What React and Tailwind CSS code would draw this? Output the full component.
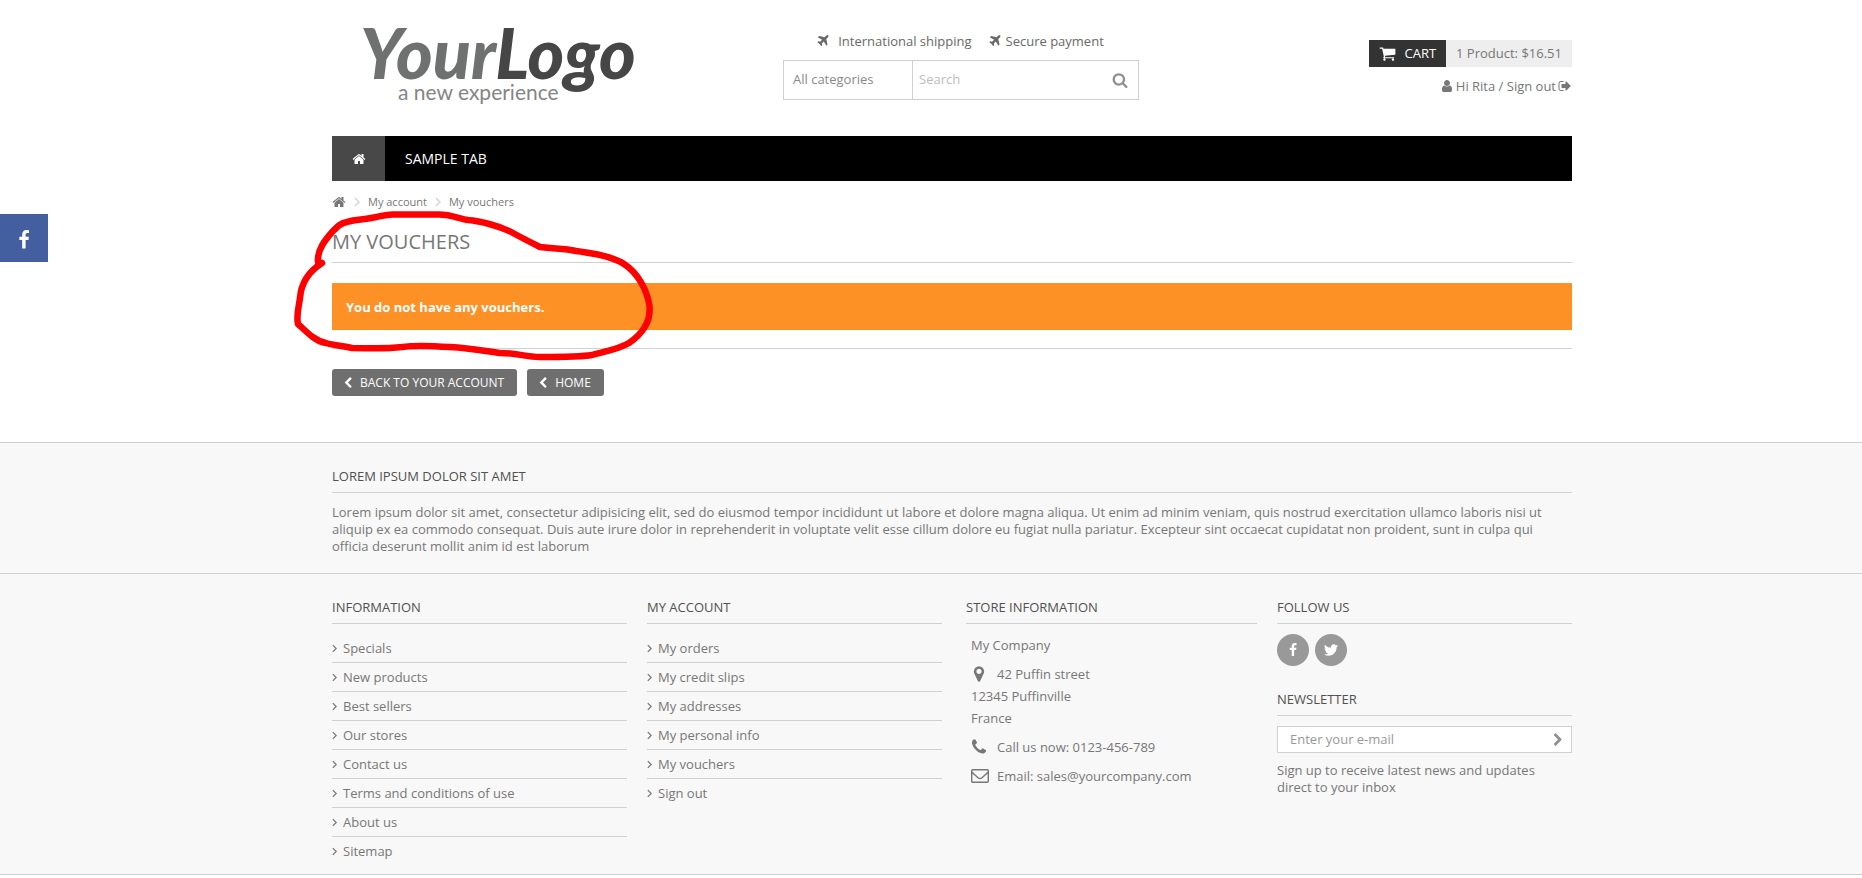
import React from "react";

const ICONS = {
  home: "M1472 992v480q0 26-19 45t-45 19h-384v-384h-256v384h-384q-26 0-45-19t-19-45v-480q0-1 .5-3t.5-3l575-474 575 474q1 2 1 6zm223-69l-62 74q-8 9-21 11h-3q-13 0-21-7l-692-577-692 577q-12 8-24 7-13-2-21-11l-62-74q-8-10-7-23.5t11-21.5l719-599q32-26 76-26t76 26l244 204v-195q0-14 9-23t23-9h192q14 0 23 9t9 23v408l219 182q10 8 11 21.5t-7 23.5z",
  plane: "M1568 160q44 52 12 148t-108 172l-161 161 160 696q5 19-12 33l-128 96q-7 6-19 6-4 0-7-1-15-3-21-16l-279-508-259 259 53 194q5 17-8 31l-96 96q-9 9-23 9h-2q-15-2-24-13l-189-252-252-189q-11-7-13-23-1-13 9-25l96-97q9-9 23-9 6 0 8 1l194 53 259-259-508-279q-14-8-17-24-2-16 9-27l128-128q14-13 30-8l665 159 160-160q76-76 172-108t148 12z",
  search: "M1216 832q0-185-131.5-316.5t-316.5-131.5-316.5 131.5-131.5 316.5 131.5 316.5 316.5 131.5 316.5-131.5 131.5-316.5zm512 832q0 52-38 90t-90 38q-54 0-90-38l-343-342q-179 124-399 124-143 0-273.5-55.5t-225-150-150-225-55.5-273.5 55.5-273.5 150-225 225-150 273.5-55.5 273.5 55.5 225 150 150 225 55.5 273.5q0 220-124 399l343 343q37 37 37 90z",
  cart: "M704 1536q0 52-38 90t-90 38-90-38-38-90 38-90 90-38 90 38 38 90zm896 0q0 52-38 90t-90 38-90-38-38-90 38-90 90-38 90 38 38 90zm128-1088v512q0 24-16.5 42.5t-40.5 21.5l-1044 122q13 60 13 70 0 16-24 64h920q26 0 45 19t19 45-19 45-45 19h-1024q-26 0-45-19t-19-45q0-11 8-31.5t16-36 21.5-40 15.5-29.5l-177-823h-204q-26 0-45-19t-19-45 19-45 45-19h256q16 0 28.5 6.5t19.5 15.5 13 24.5 8 26 5.5 29.5 4.5 26h1201q26 0 45 19t19 45z",
  user: "M1536 1399q0 109-62.5 187t-150.5 78h-854q-88 0-150.5-78t-62.5-187q0-85 8.5-160.5t31.5-152 58.5-131 94-89 134.5-34.5q131 128 313 128t313-128q76 0 134.5 34.5t94 89 58.5 131 31.5 152 8.5 160.5zm-256-887q0 159-112.5 271.5t-271.5 112.5-271.5-112.5-112.5-271.5 112.5-271.5 271.5-112.5 271.5 112.5 112.5 271.5z",
  signOut: "M704 1440q0 4 1 20t.5 26.5-3 23.5-10 19.5-20.5 6.5h-320q-119 0-203.5-84.5t-84.5-203.5v-704q0-119 84.5-203.5t203.5-84.5h320q13 0 22.5 9.5t9.5 22.5q0 4 1 20t.5 26.5-3 23.5-10 19.5-20.5 6.5h-320q-66 0-113 47t-47 113v704q0 66 47 113t113 47h312l11.5 1 11.5 3 8 5.5 7 9 2 13.5zm928-544q0 26-19 45l-544 544q-19 19-45 19t-45-19-19-45v-288h-448q-26 0-45-19t-19-45v-384q0-26 19-45t45-19h448v-288q0-26 19-45t45-19 45 19l544 544q19 19 19 45z",
  chevronLeft: "M1427 301l-531 531 531 531q19 19 19 45t-19 45l-166 166q-19 19-45 19t-45-19l-742-742q-19-19-19-45t19-45l742-742q19-19 45-19t45 19l166 166q19 19 19 45t-19 45z",
  chevronRight: "M365 301l531 531-531 531q-19 19-19 45t19 45l166 166q19 19 45 19t45-19l742-742q19-19 19-45t-19-45l-742-742q-19-19-45-19t-45 19l-166 166q-19 19-19 45t19 45z",
  facebook: "M1343 12v264h-157q-86 0-116 36t-30 108v189h293l-39 296h-254v759h-306v-759h-255v-296h255v-218q0-186 104-288.5t277-102.5q147 0 228 12z",
  twitter: "M1684 408q-67 98-162 167 1 14 1 42 0 130-38 259.5t-115.5 248.5-184.5 210.5-258 146-323 54.5q-271 0-496-145 35 4 78 4 225 0 401-138-105-2-188-64.5t-114-159.5q33 5 61 5 43 0 85-11-112-23-185.5-111.5t-73.5-205.5v-4q68 38 146 41-66-44-105-115t-39-154q0-88 44-163 121 149 294.5 238.5t371.5 99.5q-8-38-8-74 0-134 94.5-228.5t228.5-94.5q140 0 236 102 109-21 205-78-37 115-142 178 93-10 186-50z",
  marker: "M1152 640q0-106-75-181t-181-75-181 75-75 181 75 181 181 75 181-75 75-181zm256 0q0 109-33 179l-364 774q-16 33-47.5 52t-67.5 19-67.5-19-46.5-52l-365-774q-33-70-33-179 0-212 150-362t362-150 362 150 150 362z",
  phone: "M1600 1240q0 27-10 70.5t-21 68.5q-21 50-122 106-94 51-186 51-27 0-53-3.5t-57.5-12.5-47-14.5-55.5-20.5-49-18q-98-35-175-83-127-79-264-216t-216-264q-48-77-83-175-3-9-18-49t-20.5-55.5-14.5-47-12.5-57.5-3.5-53q0-92 51-186 56-101 106-122 25-11 68.5-21t70.5-10q14 0 21 3 18 6 53 76 11 19 30 54t35 63.5 31 53.5q3 4 17.5 25t21.5 35.5 7 28.5q0 20-28.5 50t-62 55-62 53-28.5 46q0 9 5 22.5t8.5 20.5 14 24 11.5 19q76 137 174 235t235 174q2 1 19 11.5t24 14 20.5 8.5 22.5 5q18 0 46-28.5t53-62 55-62 50-28.5q14 0 28.5 7t35.5 21.5 25 17.5q25 15 53.5 31t63.5 35 54 30q70 35 76 53 3 7 3 21z",
};

const Icon = ({ name, className }) => (
  <svg viewBox="0 0 1792 1792" fill="currentColor" aria-hidden="true" className={`shrink-0 ${className}`}>
    <path d={ICONS[name]} />
  </svg>
);

// Thin ">" used by the breadcrumb and the footer lists
const Angle = ({ className }) => (
  <svg viewBox="0 0 6 10" fill="none" stroke="currentColor" strokeWidth="1.5" aria-hidden="true" className={`shrink-0 ${className}`}>
    <path d="M1 1l4 4-4 4" />
  </svg>
);

const Envelope = ({ className }) => (
  <svg viewBox="0 0 18 14" fill="none" stroke="currentColor" strokeWidth="1.4" aria-hidden="true" className={`shrink-0 ${className}`}>
    <rect x="0.7" y="0.7" width="16.6" height="12.6" rx="1" />
    <path d="M1 3c1 1.500 2 2.200 3 3L7 8.800c1.400 1.100 2.600 1.100 4 0L14 6c1-.8 2-1.500 3-3" />
  </svg>
);

const Container = ({ className = "", children }) => (
  <div className="pl-[42px]">
    <div className={`mx-auto max-w-[1240px] ${className}`}>{children}</div>
  </div>
);

const infoLinks = [
  "Specials",
  "New products",
  "Best sellers",
  "Our stores",
  "Contact us",
  "Terms and conditions of use",
  "About us",
  "Sitemap",
];

const accountLinks = [
  "My orders",
  "My credit slips",
  "My addresses",
  "My personal info",
  "My vouchers",
  "Sign out",
];

const FooterTitle = ({ children }) => (
  <h4 className="border-b border-[#d0d0d0] pb-2 text-[13px] leading-4 text-[#515151] uppercase">
    {children}
  </h4>
);

const LinkColumn = ({ title, links }) => (
  <section>
    <FooterTitle>{title}</FooterTitle>
    <ul className="mt-2.5">
      {links.map((link) => (
        <li key={link} className="border-b border-[#d0d0d0] last:border-b-0">
          <a href="#" className="flex h-7 items-center gap-1.5 pt-px">
            <Angle className="h-[9px] w-[5px]" />
            {link}
          </a>
        </li>
      ))}
    </ul>
  </section>
);

const Header = () => (
  <header>
    <Container>
      <div className="grid h-[136px] grid-cols-[451fr_356fr_433fr]">
        <a href="#" className="pl-6" aria-label="YourLogo, a new experience">
          <svg viewBox="0 0 320 120" className="h-[120px] w-[320px] overflow-visible">
            <text x="4" y="79" fill="#6f7070" fontFamily="'Brush Script MT', Lato, cursive" fontSize="70" fontWeight="900" fontStyle="italic">
              Your<tspan fill="#464646">Logo</tspan>
            </text>
            <text x="42" y="100" fill="#858585" fontFamily="Lato, sans-serif" fontSize="21" fontWeight="400">
              a new experience
            </text>
          </svg>
        </a>

        <div className="pt-8">
          <div className="flex items-center justify-center gap-4 pr-0.5 leading-[18px] text-[#696969]">
            <span className="flex items-center gap-2">
              <Icon name="plane" className="h-3.5 w-3.5" />
              International shipping
            </span>
            <span className="flex items-center gap-1">
              <Icon name="plane" className="h-3.5 w-3.5" />
              Secure payment
            </span>
          </div>
          <form className="mt-2.5 flex h-10 border border-[#d0d0d0]">
            <select aria-label="Category" className="w-[129px] appearance-none border-r border-[#d0d0d0] pl-[9px] text-[#8a8a8a]">
              <option>All categories</option>
            </select>
            <input type="text" aria-label="Search" placeholder="Search" className="min-w-0 flex-1 px-1.5 placeholder:text-[#bdbdbd]" />
            <button type="button" aria-label="Submit search" className="px-2.5 text-[#8f8f8f]">
              <Icon name="search" className="h-4 w-4" />
            </button>
          </form>
        </div>

        <div className="flex flex-col items-end pt-10">
          <a href="#" className="flex leading-[27px]">
            <span className="flex items-center gap-2 bg-[#333] px-2.5 text-white">
              <Icon name="cart" className="h-[17px] w-[17px]" />
              CART
            </span>
            <span className="bg-[#eee] px-2.5">1 Product: $16.51</span>
          </a>
          <div className="mt-2.5 flex items-center gap-0.5 leading-[18px]">
            <Icon name="user" className="h-3.5 w-3.5" />
            <span>
              <a href="#">Hi Rita</a> / <a href="#">Sign out</a>
            </span>
            <Icon name="signOut" className="h-3.5 w-3.5" />
          </div>
        </div>
      </div>

      <nav className="flex h-[45px] bg-black text-sm text-white">
        <a href="#" aria-label="Home" className="flex w-[53px] items-center justify-center bg-[#484848]">
          <Icon name="home" className="h-3.5 w-3.5" />
        </a>
        <a href="#" className="flex items-center px-5">SAMPLE TAB</a>
      </nav>
    </Container>
  </header>
);

const BackButton = ({ children }) => (
  <a href="#" className="flex h-[27px] items-center gap-1.5 rounded-[3px] bg-[#6f6f6f] pr-[13px] pl-2.5 text-xs text-white">
    <Icon name="chevronLeft" className="h-3 w-3" />
    {children}
  </a>
);

const Vouchers = () => (
  <main>
    <Container className="relative pb-[46px]">
      <nav aria-label="Breadcrumb" className="flex items-center gap-2 pt-3 text-[11px] leading-[18px]">
        <a href="#" aria-label="Home">
          <Icon name="home" className="h-3.5 w-3.5" />
        </a>
        <Angle className="h-2.5 w-1.5 text-[#d6d4d4]" />
        <a href="#">My account</a>
        <Angle className="h-2.5 w-1.5 text-[#d6d4d4]" />
        <span>My vouchers</span>
      </nav>

      <h1 className="mt-[17px] border-b border-[#d0d0d0] pb-1.5 text-xl leading-7 uppercase">My vouchers</h1>

      <p className="mt-5 bg-[#fe9126] px-3.5 pt-px text-[13px] leading-[46px] font-bold text-white">
        You do not have any vouchers.
      </p>

      <div className="mt-[18px] flex gap-2.5 border-t border-[#d0d0d0] pt-5">
        <BackButton>BACK TO YOUR ACCOUNT</BackButton>
        <BackButton>HOME</BackButton>
      </div>

      {/* hand-drawn marker around the message */}
      <svg
        viewBox="290 205 370 160"
        fill="none"
        stroke="#ff0000"
        strokeWidth="6.5"
        strokeLinecap="round"
        strokeLinejoin="round"
        aria-hidden="true"
        className="pointer-events-none absolute top-6 -left-[42px] h-40 w-[370px]"
      >
        <path d="M318 262C317 250 325 240 333 231C338 226 341 223 347 222C356 219 362 220 371 218C380 217 385 214 394 214.500L438 214.500C450 214 460 219 468 220C480 221 500 226 513 233C524 239 532 243 540 247C556 249 564 248 576 251C592 253 614 257 624 264C638 273 647 290 649.500 306C651 322 642 334 629 343C617 350 605 351 592 355C580 357 560 357 540 357C525 357 518 353 500 353C485 351 470 348 450 347C435 346 415 345 402 347C385 349 370 348 352 348C342 346 333 345 326 343C314 341 305 330 298 324C296 315 299 306 300 298C301 284 308 272 322 263" />
      </svg>
    </Container>
  </main>
);

const Footer = () => (
  <footer className="border-y border-[#d0d0d0] bg-[#f8f8f8]">
    <div className="border-b border-[#d0d0d0] pt-[25px] pb-[18px]">
      <Container>
        <FooterTitle>Lorem ipsum dolor sit amet</FooterTitle>
        <p className="mt-[11px] leading-[17px]">
          Lorem ipsum dolor sit amet, consectetur adipisicing elit, sed do eiusmod tempor incididunt ut labore et
          dolore magna aliqua. Ut enim ad minim veniam, quis nostrud exercitation ullamco laboris nisi ut aliquip ex
          ea commodo consequat. Duis aute irure dolor in reprehenderit in voluptate velit esse cillum dolore eu fugiat
          nulla pariatur. Excepteur sint occaecat cupidatat non proident, sunt in culpa qui officia deserunt mollit
          anim id est laborum
        </p>
      </Container>
    </div>

    <Container className="grid grid-cols-4 gap-5 pt-[25px] pb-[9px]">
      <LinkColumn title="Information" links={infoLinks} />
      <LinkColumn title="My account" links={accountLinks} />

      <section className="pl-1">
        <FooterTitle>Store information</FooterTitle>
        <address className="mt-2.5 px-[5px] leading-[22px] not-italic">
          <p>My Company</p>
          <p className="mt-[7px] flex items-center gap-2">
            <Icon name="marker" className="-ml-0.5 h-[18px] w-5" />
            42 Puffin street
          </p>
          <p>12345 Puffinville</p>
          <p>France</p>
          <p className="mt-[7px] flex items-center gap-2">
            <Icon name="phone" className="-ml-0.5 h-[18px] w-5" />
            Call us now: 0123-456-789
          </p>
          <p className="mt-[7px] flex items-center gap-2">
            <Envelope className="h-3.5 w-[18px]" />
            <span>
              Email: <a href="#">sales@yourcompany.com</a>
            </span>
          </p>
        </address>
      </section>

      <section>
        <FooterTitle>Follow us</FooterTitle>
        <div className="mt-2.5 flex gap-1.5">
          <a href="#" aria-label="Facebook" className="flex h-8 w-8 items-center justify-center rounded-full bg-[#999] text-white">
            <Icon name="facebook" className="h-3.5 w-3.5" />
          </a>
          <a href="#" aria-label="Twitter" className="flex h-8 w-8 items-center justify-center rounded-full bg-[#999] text-white">
            <Icon name="twitter" className="h-4 w-4" />
          </a>
        </div>

        <div className="mt-[25px]">
          <FooterTitle>Newsletter</FooterTitle>
          <form className="mt-2.5 flex h-[27px] border border-[#d0d0d0] bg-white">
            <input type="email" aria-label="E-mail" placeholder="Enter your e-mail" className="min-w-0 flex-1 px-3 pt-px placeholder:text-[#999]" />
            <button type="button" aria-label="Subscribe" className="px-1.5 text-[#8f8f8f]">
              <Icon name="chevronRight" className="h-3.5 w-3.5" />
            </button>
          </form>
          <p className="mt-[9px] leading-[17px]">Sign up to receive latest news and updates direct to your inbox</p>
        </div>
      </section>
    </Container>
  </footer>
);

export default function App() {
  return (
    <div className="relative min-h-screen bg-white font-['Open_Sans',sans-serif] text-[13px] text-[#777]">
      <Header />
      <Vouchers />
      <Footer />
      <a href="#" aria-label="Facebook page" className="absolute top-[214px] left-0 flex h-12 w-12 items-center justify-center bg-[#435f9f] pt-1 text-white">
        <Icon name="facebook" className="h-5 w-5" />
      </a>
    </div>
  );
}
